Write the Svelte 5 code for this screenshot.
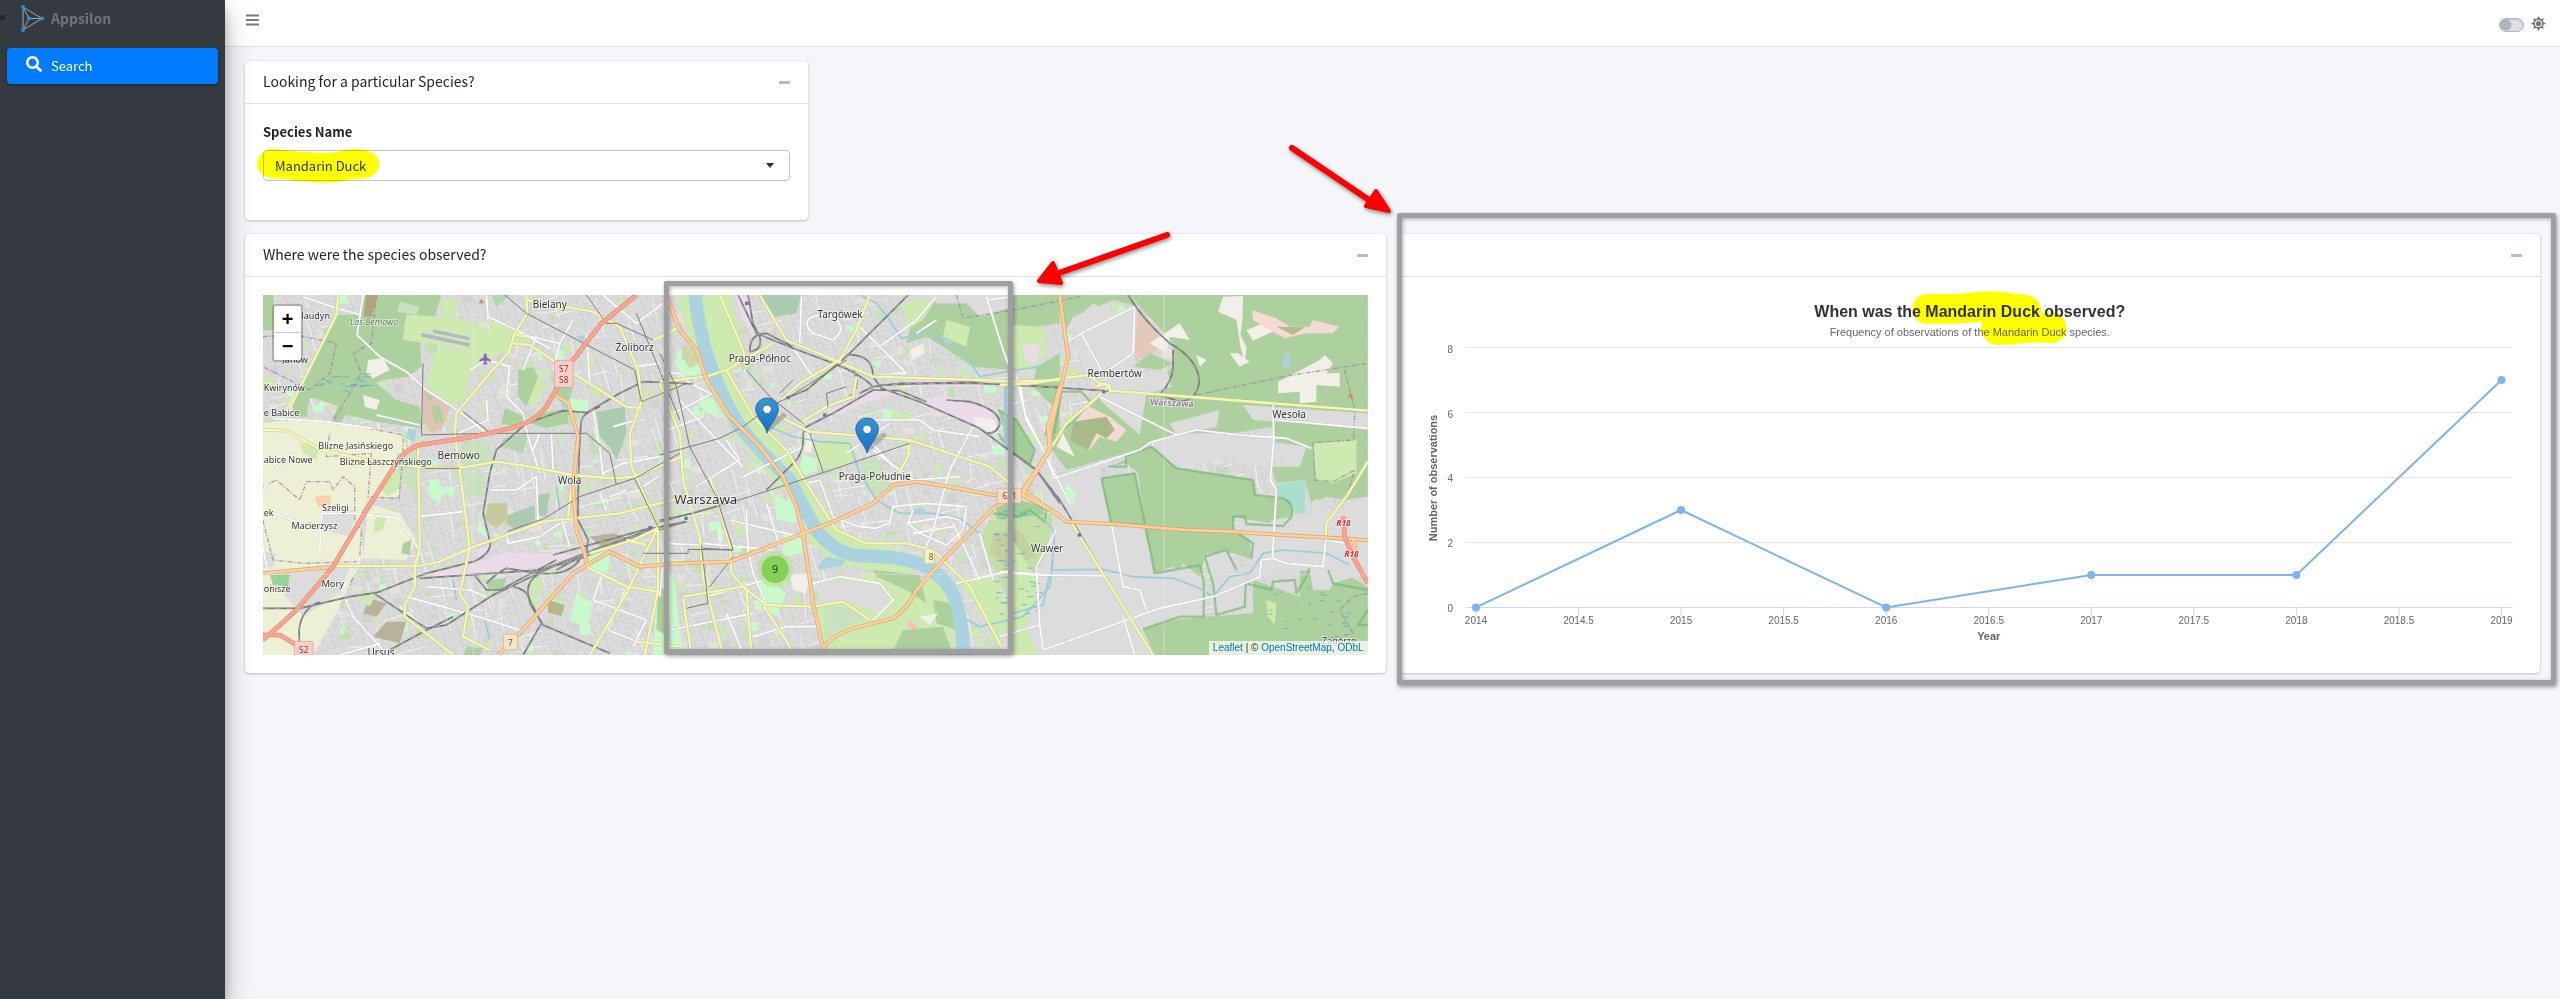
<script>
  const years = [2014, 2014.5, 2015, 2015.5, 2016, 2016.5, 2017, 2017.5, 2018, 2018.5, 2019];
  const counts = [
    [2014, 0],
    [2015, 3],
    [2016, 0],
    [2017, 1],
    [2018, 1],
    [2019, 7]
  ];
  const px = (year) => 58 + (year - 2014) * 205.2;
  const py = (n) => 312.5 - n * 32.5;
  const line = counts.map(([y, n]) => `${px(y)},${py(n)}`).join(' ');

  // The map is drawn in three sheets: west, centre and east.
  const sheets = { w: 0, c: 1260, e: 2280 };

  const areas = [
    // farmland
    ['w', '#eef0d5', 'M69 610L150 600L330 612L490 640L500 690L470 740L480 830L385 835L360 890L370 1010L330 1090L290 1180L220 1305L69 1305Z'],
    ['w', '#eef0d5', 'M385 850L480 880L530 960L500 1020L370 1015Z'],
    ['w', '#eef0d5', 'M160 520L200 540L190 580L130 590Z'],
    ['w', '#dcdcdc', 'M69 995L110 1000L100 1040L69 1045Z M250 880L350 870L330 950L250 930Z M130 1050L330 1040L300 1120L190 1190L130 1120Z'],
    ['w', '#f5d1ad', 'M225 830L270 825L275 855L235 862Z M85 1095L100 1090L100 1120L88 1120Z M140 1080L150 1075L150 1090Z'],
    ['w', '#96d59a', 'M90 1065L150 1062L145 1100L100 1095Z'],
    ['w', '#cdebb0', 'M440 760L470 740L490 800L440 830L420 800Z M410 880L440 890L430 930L400 940Z M230 1080L250 1050L270 1060L250 1100Z M180 670L240 680L230 720L190 700Z'],
    // forest around Bemowo
    ['w', '#add19e', 'M69 225L102 225L102 330L69 330Z'],
    ['w', '#add19e', 'M292 285L360 285L372 250L380 225L605 225L585 290L505 290L490 320L540 350L545 440L505 470L430 480L350 520L300 560L225 535L170 535L210 450Z'],
    ['w', '#add19e', 'M350 500L410 490L470 540L540 560L545 625L410 605L300 580L330 530Z'],
    ['w', '#b2a57a', 'M378 225L414 225L395 292L372 290Z'],
    ['w', '#add19e', 'M160 530L210 535L200 590L160 590Z M300 550L335 560L300 610L275 600Z'],
    ['w', '#c9e1bf', 'M480 245L540 260L530 285L472 275Z'],
    ['w', '#f2efe9', 'M385 420L430 415L450 450L400 475L380 460Z M370 525L420 540L410 570L375 560Z'],
    // airfield and allotments
    ['w', '#cdebb0', 'M500 285L640 290L820 355L820 390L740 420L640 380L490 360Z'],
    ['w', '#cdebb0', 'M600 380L740 410L690 470L680 530L640 560L560 500L575 420Z'],
    ['w', '#b5b6c8', 'M545 338L690 370L690 380L545 350Z M580 328L690 352L690 361L580 338Z'],
    ['w', '#dfc3b3', 'M548 500L632 560L605 630L570 638L550 600Z'],
    ['w', '#add19e', 'M575 560L600 555L610 600L585 610Z M555 520L580 530L570 545Z'],
    ['w', '#cdebb0', 'M600 240L650 235L655 280L610 285Z'],
    ['w', '#cdebb0', 'M740 300L860 340L830 375L760 350Z M840 450L890 455L920 500L880 560L840 520Z'],
    ['w', '#add19e', 'M835 450L880 440L895 470L860 560L835 530Z M795 565L860 590L835 620L785 612Z M940 500L1000 500L990 540L945 530Z M900 580L990 565L985 610L920 625L870 610Z'],
    ['w', '#b3d6b0', 'M755 225L810 225L770 262Z M790 655L865 640L850 700L785 680Z'],
    ['w', '#aacbaf', 'M1070 575L1155 560L1160 640L1130 720L1110 680L1080 650Z M895 825L930 820L920 890L895 885Z M805 885L885 855L885 900L830 930L800 910Z'],
    ['w', '#c8c89f', 'M745 850L800 850L805 895L770 925L735 900Z'],
    ['w', '#c9e1bf', 'M690 660L750 665L760 720L670 740L660 690Z M670 760L740 755L730 830L680 830Z M470 700L540 700L535 840L485 780Z'],
    ['w', '#c8facc', 'M560 800L650 800L640 830L610 820L600 850L570 830Z M990 535L1045 540L1045 575L995 570Z M1045 1000L1110 1000L1105 1060L1050 1050Z M730 860L715 890L750 960L710 930Z'],
    ['w', '#cdebb0', 'M565 1050L660 1030L690 1020L680 1040L590 1060Z M880 1070L910 1080L900 1125L870 1110Z'],
    ['w', '#ebdbe8', 'M570 1060L700 1030L790 1000L960 1000L1020 1010L900 1040L760 1060L690 1060L590 1078Z M720 985L750 980L740 1005L712 1015Z'],
    ['w', '#b9b29a', 'M390 1135L440 1150L410 1190L370 1180Z M440 1205L500 1205L480 1270L400 1250Z M1050 950L1120 940L1180 960L1090 985Z'],
    ['w', '#cdebb0', 'M380 1110L410 1120L390 1160L360 1140Z M920 1130L980 1150L970 1190L920 1170Z'],
    ['w', '#b6b58e', 'M925 1140L975 1155L965 1188L925 1178Z'],
    ['w', '#add19e', 'M490 970L515 960L510 1005L485 1000Z M740 1080L800 1075L790 1105L745 1115Z M680 1280L730 1285L720 1305L670 1305Z'],
    ['w', '#c8facc', 'M1010 1120L1060 1150L1040 1220L990 1200Z M1250 1080L1300 1060L1330 1305L1240 1305L1245 1190Z'],
    ['w', '#add19e', 'M1255 1090L1285 1120L1290 1250L1250 1230Z'],
    // banks of the river
    ['c', '#cdebb0', 'M45 225L215 225L235 330L250 400L215 470L300 600L380 690L430 760L470 860L560 940L700 985L800 1010L740 1060L560 1040L450 970L390 830L290 730L180 570L130 430L85 340Z'],
    ['c', '#c8facc', 'M55 390L120 400L130 460L70 470L45 430Z M120 520L165 540L180 600L120 560Z M345 830L410 850L410 910L350 900Z M300 1080L345 1090L380 1120L350 1190L300 1150Z M370 930L425 960L430 1000L370 1010Z'],
    ['c', '#aacbaf', 'M300 225L425 225L410 280L350 290L320 270Z'],
    ['c', '#ebdbe8', 'M225 225L260 225L290 310L280 350L250 300Z M540 390L600 370L570 410Z'],
    ['c', '#ebdbe8', 'M500 575L580 540L660 505L740 520L690 525L600 555L540 585Z M740 480L960 480L960 500L720 495Z M760 540L860 525L920 550L1000 570L1015 620L990 640L900 600L810 570Z'],
    ['c', '#f2efe9', 'M750 390L790 370L795 400L760 420Z M940 590L1005 600L1010 640L950 620Z M390 1065L450 1060L440 1120L400 1110Z'],
    ['c', '#cdd6a8', 'M70 375L110 390L120 430L90 445L65 410Z'],
    ['c', '#cdebb0', 'M470 660L560 655L600 700L550 740L490 745L460 700Z M690 570L760 580L740 600L680 600Z'],
    ['c', '#c8facc', 'M430 700L470 720L470 755L430 765L420 735Z M670 570L695 570L695 600L670 600Z'],
    ['c', '#f2efe9', 'M440 640L460 650L455 700L435 695Z'],
    ['c', '#c9e1bf', 'M600 720L660 720L690 790L650 830L620 800Z'],
    ['c', '#add19e', 'M840 225L1200 225L1200 310L1060 330L1060 450L940 440L850 380L800 350L740 370L760 290Z'],
    ['c', '#cdebb0', 'M730 250L830 235L790 300L740 330Z M860 300L930 320L920 380L850 350Z M1060 330L1150 320L1160 400L1100 460L1060 440Z'],
    ['c', '#dcdcdc', 'M800 225L1050 225L1060 260L960 290L920 250L830 250Z'],
    ['c', '#ebdbe8', 'M1090 370L1130 375L1120 420L1085 410Z'],
    ['c', '#add19e', 'M1130 440L1200 400L1200 640L1150 650L1180 560L1120 500Z'],
    ['c', '#a4cf9b', 'M1015 570L1070 600L1125 690L1110 740L1050 690Z'],
    ['c', '#a4cf9b', 'M1010 860L1080 840L1150 860L1160 905L1100 900L1010 900Z'],
    ['c', '#c3dfa8', 'M990 900L1200 880L1200 1180L1100 1260L990 1020L960 950Z'],
    ['c', '#c6cfa0', 'M1000 940L1080 930L1130 1010L1040 1040L990 1000Z'],
    ['c', '#cdebb0', 'M480 1090L640 1060L740 1080L850 1080L880 1200L880 1305L490 1305L470 1200Z'],
    ['c', '#add19e', 'M640 1050L780 1065L800 1150L740 1110L650 1070Z M730 1230L850 1220L880 1305L700 1290Z M820 1140L880 1150L890 1230L830 1210Z'],
    ['c', '#dcdcdc', 'M470 1090L640 1080L690 1130L660 1180L560 1140L480 1150Z'],
    ['c', '#c9e1bf', 'M495 1150L590 1170L620 1190L520 1240L495 1260Z'],
    ['c', '#ffb8c0', 'M745 1200L775 1220L770 1232L745 1218Z'],
    ['c', '#f2efe9', 'M780 1190L835 1180L810 1215Z'],
    ['c', '#cdebb0', 'M890 1080L1000 1060L1060 1200L1020 1270L950 1150Z M1060 1200L1200 1230L1200 1305L1060 1305Z'],
    // eastern woods
    ['e', '#add19e', 'M170 225L1104 225L1104 600L820 620L700 640L560 660L450 668L410 690L200 750L150 680L210 620L300 530L440 500L520 440L520 370L390 225L415 260L340 240L220 290L200 330Z'],
    ['e', '#dcdcdc', 'M215 310L280 250L340 280L405 260L400 400L430 480L500 440L515 500L450 520L300 510L260 470L230 390Z'],
    ['e', '#e3c9b9', 'M412 270L470 330L480 380L440 420L405 410Z'],
    ['e', '#add19e', 'M450 400L520 430L480 450L400 440Z'],
    ['e', '#f2efe9', 'M670 230L730 228L728 300L722 345L740 380L735 430L722 380L710 300L655 275Z M450 370L540 310L570 360L510 350L500 400Z M740 330L790 310L830 330L760 362Z M865 470L960 420L975 405L1000 430L980 460L1020 460L1020 500L950 495L950 545L900 550L900 515L835 520L835 485Z M690 400L715 400L750 425L720 440Z M590 405L620 420L600 440Z'],
    ['e', '#f5d9d3', 'M757 270L830 295L870 320L930 320L940 300L1018 320L1000 340L920 340L855 355L810 330L760 300Z'],
    ['e', '#b5ba8b', 'M830 320L915 322L880 345Z'],
    ['e', '#f5d9d3', 'M270 560L330 590L380 630L350 665L300 650L270 690L210 660L220 600Z'],
    ['e', '#a9b987', 'M220 605L320 590L345 630L320 655L290 640L265 690L210 660Z'],
    ['e', '#f2efe9', 'M190 640L210 680L225 710L170 680Z'],
    ['e', '#dcdcdc', 'M300 520L440 520L420 645L300 540Z M510 610L660 570L650 620L530 645Z M460 670L540 640L680 640L820 660L810 740L740 740L700 710L560 740L510 720Z M730 555L1104 580L1104 620L830 605L760 600Z'],
    ['e', '#dcdcdc', 'M820 670L920 680L900 740L820 720Z M150 780L300 735L330 920L430 920L460 1060L610 1090L610 1190L500 1190L430 1225L460 1305L110 1305L60 1150L140 1000L160 900L100 750Z'],
    ['e', '#add19e', 'M820 605L1104 625L1104 830L1040 840L980 830L935 850L915 780L830 790L815 740L900 740L920 680L820 665Z'],
    ['e', '#cdebb0', 'M940 670L1070 660L1070 760L1000 790L950 780Z'],
    ['e', '#add19e', 'M305 775L405 760L425 850L440 920L330 905Z M455 680L530 745L760 780L770 830L870 840L880 880L850 920L740 910L700 890L700 930L760 970L760 1020L700 1000L620 1000L600 1070L520 1040L465 1060L440 940L415 760L380 730L330 740Z'],
    ['e', '#add19e', 'M620 1190L760 1180L760 1080L900 1130L900 1050L1000 1040L1104 1100L1104 1305L465 1305L430 1230L520 1200Z'],
    ['e', '#dcdcdc', 'M610 1010L680 990L710 1060L740 1080L740 1160L655 1180L640 1080Z M510 1090L550 1030L610 1080L610 1180L520 1160Z'],
    ['e', '#dcdcdc', 'M700 890L810 910L820 900L1104 850L1104 1060L1000 1090L990 1110L940 1110L930 1050L760 1060L750 960Z M1040 840L1104 830L1104 900L1030 890Z'],
    ['e', '#aadfcb', 'M830 795L918 782L914 878L885 882L870 840L832 830Z'],
    ['e', '#c8facc', 'M198 785L230 820L220 850L200 850Z'],
    ['e', '#dcdcdc', 'M935 850Q950 825 970 850L965 880L935 880Z'],
    ['e', '#cdebb0', 'M40 315L115 320L105 400L60 450L45 420Z M40 960L120 1100L60 1270L38 1200Z M800 1140L830 1150L825 1215L805 1190Z'],
    ['e', '#ebdbe8', 'M70 370L120 375L110 430L75 420Z']
  ];

  const forestEdges = [
    ['c', 'M1015 570L1070 600L1125 690L1110 735L1050 690L1015 640'],
    ['c', 'M1000 880L1080 890L1110 870L1155 905L1160 870L1110 840'],
    ['e', 'M305 775L405 760L465 1060L600 1035L612 1085L612 1190L540 1190L430 1228'],
    ['e', 'M305 775L335 910L430 915'],
    ['e', 'M325 740L380 740L378 710L455 680L530 745L760 780L765 825L850 835Q885 850 875 890L850 918L740 912L735 890L700 890L700 930L760 970L755 1015'],
    ['e', 'M615 1010L640 1090L650 1185L735 1160L738 1090L815 1110L820 1085L885 1080L890 1120L920 1070L930 1045'],
    ['e', 'M615 1010L680 990L710 1050'],
    ['e', 'M185 515L245 515L272 545L225 600L160 660Z'],
    ['e', 'M985 1050L1000 1090L1104 1110M1104 1170L1075 1215L1104 1215']
  ];

  const boundaries = [
    ['w', 'M410 225L395 370L340 400L365 460L300 570L280 605L165 600'],
    ['w', 'M69 350L170 345L290 370L270 460L210 510L69 440'],
    ['w', 'M280 605L440 635L490 645L490 700L478 835L385 830L395 700L260 710L270 640'],
    ['w', 'M69 800L110 780L180 840L200 785L270 785L280 810L310 770L345 800L345 900L365 930L360 1010L330 1100'],
    ['w', 'M69 900L100 1020L190 1030L350 1025'],
    ['c', 'M890 225L910 295L1070 268L1260 230'],
    ['e', 'M590 525L860 468L1104 430'],
    ['e', 'M1035 450L1065 570L1062 660L940 668L945 780L1000 785L1065 750L1040 830'],
    ['e', 'M1104 1120L1060 1130L1020 1170L1060 1240L970 1260']
  ];

  const streams = [
    ['c', 'M600 225L650 250L690 300L725 355L800 340L870 370L920 410L960 470L1070 450L1140 440'],
    ['c', 'M330 620L400 650L480 665L570 670L600 760L650 840L720 880L820 880L900 895L960 940'],
    ['c', 'M1040 480L1040 690M890 1180L960 1220L1090 1190L1170 1100L1180 1020'],
    ['e', 'M15 500L15 670L50 672M130 890L165 940L155 1050L310 1048L400 1070L520 1075L590 1100L640 1130L690 1070L750 1060L790 1000L850 990L980 1000L1050 1035'],
    ['w', 'M640 1080L650 1140M950 800L960 870M735 1200L750 1260'],
    ['e', 'M38 1180L130 1155L150 1060']
  ];

  const minor = [
    ['w', 'M190 230L290 265L365 285M370 225L352 345L420 410L500 455L560 510L660 575L740 640'],
    ['w', 'M100 595L260 605L400 625M410 585L540 615M155 680L69 810M240 1000L245 880L350 880L475 895L535 985M105 880L245 935'],
    ['w', 'M535 890L670 875M740 225L745 290L840 335L930 385M690 450L740 420L810 440L800 530L850 580L865 650L900 760'],
    ['w', 'M740 540L745 600L655 640M830 340L960 370L1000 300M900 640L880 690M935 645L940 750M750 810L830 810L890 770L895 905L890 910L965 895L990 980'],
    ['w', 'M1090 225L1190 310L1270 250M1185 440L1260 430M1060 570L1080 680L1090 770M1090 760L1150 730L1260 710M1080 820L1100 870'],
    ['w', 'M360 1010L350 1050L305 1110L340 1190L430 1290M500 1130L680 1180L840 1230M540 1210L480 1160M800 930L805 970L900 950L960 910'],
    ['w', 'M1060 1140L1090 1060M1060 1140L1220 1200M1180 1280L1220 1200M1160 1100L1105 1230L1180 1260M300 1305L420 1270M69 980L85 1060'],
    ['w', 'M1120 620L1190 600M1110 830L1160 810M960 370L940 450M1040 340L1050 490M890 350L850 450'],
    ['c', 'M420 370L425 230M450 295Q500 270 530 300Q560 330 520 360L460 340Q430 310 450 295M390 370L460 470M590 310L740 460L700 460M660 380L770 300L830 230'],
    ['c', 'M0 460L60 460L90 490L150 520M60 540L190 680L250 740M40 580L160 520M20 630L130 590M110 800L240 720L200 660M250 770L430 680'],
    ['c', 'M640 600L780 600L820 630L960 650M940 620L870 750L820 930L795 990M610 640L700 740M560 700L690 610M640 690L760 780L900 770'],
    ['c', 'M440 790L480 780L520 890L600 920L650 925L690 910L700 860L800 850L920 860L910 930L860 975L780 940L745 910L760 870'],
    ['c', 'M740 910L860 890L900 900M760 940L880 920M960 940L1000 1080M880 910L960 1080M540 890L560 940'],
    ['c', 'M460 1090L540 1070L660 1090L700 1140L640 1200M890 1090L1040 1055L1170 1065M260 870L265 990L280 1060L320 1150'],
    ['c', 'M140 1130L260 1095L320 1080M280 1250L380 1220L470 1220M130 970L340 990M210 900L420 950M320 850L360 980M30 1230L280 1180M200 1180L250 1300M20 970L120 975'],
    ['c', 'M980 230L1030 390L1060 470M980 240L1060 230M1070 470L1100 600L1150 690M770 340L830 300'],
    ['e', 'M205 365L245 340L405 260L400 400L310 460M245 340L310 460M300 530L530 645L590 630L720 645L860 655L935 685M530 645L450 668L420 690L165 775L130 690L75 580L60 480'],
    ['e', 'M820 550L822 660L812 780L830 810L818 1015L785 1020L780 1070L640 1130L480 1165L130 1290M818 1015L860 1030L970 1040L978 960L1040 970'],
    ['e', 'M335 910L370 1100L420 1110L440 1170M170 930L110 1040L120 1215L130 1290M0 1055L100 1065L320 1068M370 1190L405 1305M130 690L210 850M0 1250L120 1215M830 600L1104 625'],
    ['w', 'M1280 950L1260 1130M560 1100L690 1110L740 1130M1210 800L1255 770']
  ];

  const tram = [
    ['w', 'M795 225L860 280L1185 450L1205 545M550 430L545 645L740 640L1040 640L1110 700L1130 795M670 575L760 645M1110 225'],
    ['w', 'M555 745L660 745M800 935L915 895L1020 830L1185 775L1320 700M1185 775L1260 930L1340 905M1205 545L1340 490M1210 1000L1345 1000L1345 988L1480 990'],
    ['c', 'M0 705L180 655L250 620L330 560L390 530L560 420M0 900L100 880L270 830L500 755L750 670M450 640L490 755M260 450L330 530L430 610M500 520L505 560M500 520L560 500'],
    ['c', 'M130 985L220 990L170 830L90 680L50 500L0 400M80 1165L145 1150L125 975M220 1010L150 1100M400 480L360 520'],
    ['w', 'M1040 225L1100 310L1130 310L1240 360M1190 280L1320 600']
  ];

  const secondary = [
    ['w', 'M295 225L290 285L215 435L150 565M69 630L140 632L245 690L380 720L530 740L655 745L770 725L860 738L1000 765L1120 775L1185 770L1325 710'],
    ['w', 'M860 225L862 280L825 340L805 400L750 460L650 580L645 640L660 750L690 985L660 1120L685 1160L670 1250L750 1290'],
    ['w', 'M535 680L540 985L525 1040L525 1100L495 1155L495 1190L640 1305'],
    ['w', 'M285 1038L540 1037L600 1025L690 985L910 905L1140 880L1320 835'],
    ['w', 'M820 370L870 375L1000 460L1160 560L1205 565M860 240L1060 275L1140 320L1195 450L1205 545L1170 640L1175 740L1255 920L1160 1120L1050 1305'],
    ['w', 'M1000 765L985 890M1255 920L1255 1110L1215 1305M1040 1040L1160 1100L1255 1115M1050 1000L1180 960L1255 925M1205 545L1320 495M1240 360L1320 320M1160 960L1220 975'],
    ['c', 'M0 355L60 320M0 485L140 470L200 450L340 370M200 450L280 590L380 690L440 790L530 930L620 970L740 970L820 990L930 1100L1030 1290'],
    ['c', 'M630 225L590 330L540 420L420 490L365 540M180 225L250 390L260 440M300 225L380 360L500 410L640 470L960 480L1070 485L1200 480M420 610L500 560L580 530L590 470'],
    ['c', 'M330 560L380 600L450 635L750 660L990 740L1050 790M750 660L745 710L700 790M0 490L60 640L70 780L120 950L130 1070L190 1305M150 770L210 970L215 1060L260 1110L275 1305M90 1000'],
    ['c', 'M70 1130L250 1100L320 1155L460 1160L550 1145L630 1200M310 1155L390 1280L400 1305M70 1135L95 1305'],
    ['e', 'M0 495L100 490L185 475L265 465L300 490L330 495L295 530L200 610L150 690M330 495L330 512L500 525L1104 572M210 900L460 1305M1104 725L1040 830L980 910L978 950M320 490L285 500'],
    ['w', 'M1190 1265L1320 1280M860 350L830 345']
  ];

  const primary = [
    ['w', 'M69 1060L230 1045L280 1040M940 520L985 550L1015 650L1000 800L1010 930L1035 1000L1040 1030M775 1305L840 1240L920 1150L1000 1060L1110 995L1200 1040L1320 1030'],
    ['c', 'M0 1035L70 1030L210 1025L380 960L520 905L640 850L700 795L770 785L870 800L1000 825L1090 825L1200 885M20 225L60 330L110 390L140 480L210 590L300 680L370 770L410 860L430 940L460 1150L490 1285'],
    ['c', 'M490 1285Q520 1240 600 1220L700 1195Q740 1170 770 1110L850 1020L1000 865L1090 820L1170 690L1165 620L1200 500'],
    ['e', 'M180 225L205 410L150 640L152 685L70 810L200 905L340 912L560 930L700 935L850 945L1104 960M1060 960L1070 1000']
  ];

  const trunk = [
    ['w', 'M1190 225L1085 310L1000 420L960 490L920 560Q890 600 830 620L700 650L540 675Q490 690 460 745L380 870L280 1040L170 1170L115 1220L69 1260M69 1245L120 1245L170 1275L200 1305'],
    ['e', 'M1030 890L1035 950L1060 1010L1104 1090']
  ];

  const rail = [
    ['w', 'M69 1165L180 1165L330 1130L410 1118L560 1060L700 1025Q750 1005 752 970L730 880L750 760L770 690L860 610L970 572L1040 578L1140 520L1210 485L1290 488L1360 492'],
    ['w', 'M1025 600Q1015 700 1015 900L1045 960L1040 1000M180 1305L178 1230Q185 1165 240 1145M400 1118L560 1225L620 1215L760 1125L960 1030L1240 925L1340 905'],
    ['w', 'M450 1290L560 1230L640 1190M540 1075L900 1050L1010 1020L1240 930M700 1060L740 1110L780 1110L950 1020M740 1090Q770 1060 800 1045L900 1060M820 1100Q870 1110 870 1150L910 1215L1110 1300M1030 1000Q1000 1070 900 1060Q850 1090 870 1140L905 1210L850 1305'],
    ['w', 'M1025 600Q1030 580 1080 560'],
    ['w', 'M940 1005L1240 922M880 1060L1100 975M950 1050L1020 1010'],
    ['c', 'M235 225L290 340L400 385L520 430Q600 460 640 500L720 490L960 490L1200 502M265 225L280 310L300 350Q310 390 270 395Q270 340 320 340L400 380M745 225L640 330L560 410L440 510L380 535'],
    ['c', 'M560 405Q640 400 640 470L665 505L780 545L960 625L1060 700L1130 750L1200 850M430 640L440 620L520 580L640 510L720 512L800 545M430 640Q435 700 400 730L320 810M0 905L170 860'],
    ['c', 'M860 540L930 545Q1020 570 1020 610Q1015 640 980 640M640 500L600 520M660 495L960 485M580 450Q610 500 560 540'],
    ['e', 'M0 492L440 520L720 540L1104 573M385 225Q430 300 510 370Q600 420 598 490Q590 540 540 545L480 525Q520 480 520 440L520 390M0 670L110 750L180 840L240 940L350 1130L460 1305']
  ];

  const labels = [
    [185, 298, 'laudyn', 'w', 27, 'start'], [166, 428, 'Janów', 'w', 27, 'middle'],
    [72, 512, 'Kwirynów', 'w', 27, 'start'], [72, 588, 'e Babice', 'w', 27, 'start'],
    [72, 728, 'abice Nowe', 'w', 27, 'start'], [348, 688, 'Blizne Jasińskiego', 'w', 27, 'middle'],
    [438, 734, 'Blizne Łaszczyńskiego', 'w', 27, 'middle'], [657, 718, 'Bemowo', 'w', 31, 'middle'],
    [930, 263, 'Bielany', 'w', 30, 'middle'], [1185, 393, 'Żoliborz', 'w', 30, 'middle'],
    [990, 793, 'Wola', 'w', 30, 'middle'], [287, 873, 'Szeligi', 'w', 27, 'middle'],
    [72, 888, 'ek', 'w', 27, 'start'], [224, 927, 'Macierzysz', 'w', 27, 'middle'],
    [279, 1100, 'Mory', 'w', 28, 'middle'], [72, 1115, 'onisze', 'w', 27, 'start'],
    [424, 1308, 'Ursus', 'w', 30, 'middle'],
    [541, 294, 'Targówek', 'c', 30, 'middle'], [300, 426, 'Praga-Północ', 'c', 30, 'middle'],
    [645, 779, 'Praga-Południe', 'c', 30, 'middle'], [138, 851, 'Warszawa', 'c', 40, 'middle'],
    [345, 472, 'Rembertów', 'e', 30, 'middle'], [868, 594, 'Wesoła', 'e', 30, 'middle'],
    [142, 996, 'Wawer', 'e', 30, 'middle'], [1018, 1271, 'Zagórze', 'e', 27, 'middle']
  ];

  const pins = [[322, 640], [622, 700]];

  // Small blocks and side streets, spread with a repeatable sequence.
  let seed = 17;
  const rnd = () => {
    seed = (seed * 16807) % 2147483647;
    return seed / 2147483647;
  };
  const tints = ['#cdebb0', '#c9e1bf', '#c3dfb4', '#c8facc', '#d2d2cf', '#cfe6c0', '#e6e2da'];
  const blocks = [];
  for (let i = 0; i < 950; i++) {
    const x = 69 + rnd() * 2900;
    const y = 225 + rnd() * 1080;
    const w = 8 + rnd() * 30;
    const h = 8 + rnd() * 24;
    const s = rnd() * 14 - 7;
    blocks.push({ d: `M${x} ${y}l${w} ${s}l${-s} ${h}l${-w} ${-s}Z`, fill: tints[Math.floor(rnd() * tints.length)] });
  }
  let lanes = '';
  for (let i = 0; i < 480; i++) {
    const x = 69 + rnd() * 3000;
    const y = 225 + rnd() * 1080;
    const l = 30 + rnd() * 70;
    const a = (rnd() < 0.5 ? -0.35 : 1.2) + rnd() * 0.3;
    lanes += `M${x} ${y}l${Math.cos(a) * l} ${Math.sin(a) * l}`;
  }
  let marsh = '';
  for (let i = 0; i < 46; i++) marsh += `M${2260 + rnd() * 130} ${870 + rnd() * 320}h${8 + rnd() * 14}`;
  for (let i = 0; i < 18; i++) marsh += `M${230 + rnd() * 150} ${460 + rnd() * 70}h${8 + rnd() * 20}`;
  for (let i = 0; i < 22; i++) marsh += `M${3060 + rnd() * 270} ${1100 + rnd() * 130}h${6 + rnd() * 14}`;
</script>

{#snippet roads(list, cls)}
  {#each list as [sheet, d]}
    <path class={cls} {d} transform="translate({sheets[sheet]} 0)" />
  {/each}
{/snippet}

{#snippet arrow(cls, w, h, shaft, head)}
  <svg class="arrow {cls}" width={w} height={h} viewBox="0 0 {w} {h}" aria-hidden="true">
    <path d={shaft} stroke="#f00" stroke-width="6" stroke-linecap="round" fill="none" />
    <path d={head} fill="#f00" stroke="#f00" stroke-width="4" stroke-linejoin="round" />
  </svg>
{/snippet}

<div class="app">
  <aside>
    <a class="brand" href="#home">
      <svg width="26" height="28" viewBox="0 0 26 28" aria-hidden="true">
        <path d="M3 3V26L22 14.500ZM3 3L9 14.500L3 26M9 14.500H22" fill="none" stroke="#a4a8ab" />
        <g fill="#0e95f5"><circle cx="3" cy="3" r="2" /><circle cx="3" cy="26" r="2" /><circle cx="9" cy="14.500" r="2" /><circle cx="22" cy="14.500" r="2" /></g>
      </svg>
      <span>Appsilon</span>
    </a>
    <nav>
      <a class="item" href="#search">
        <svg width="16" height="16" viewBox="0 0 512 512" aria-hidden="true"><path fill="#fff" d="M505 442.700L405.300 343c-4.500-4.500-10.600-7-17-7H372c27.600-35.300 44-79.700 44-128C416 93.100 322.900 0 208 0S0 93.100 0 208s93.100 208 208 208c48.300 0 92.700-16.400 128-44v16.300c0 6.400 2.500 12.500 7 17l99.700 99.700c9.400 9.400 24.600 9.400 33.900 0l28.300-28.300c9.400-9.400 9.400-24.600.1-34zM208 336c-70.700 0-128-57.200-128-128 0-70.700 57.200-128 128-128 70.700 0 128 57.200 128 128 0 70.700-57.200 128-128 128z" /></svg>
        <span>Search</span>
      </a>
    </nav>
  </aside>

  <div class="page">
    <header>
      <button class="menu" aria-label="Toggle sidebar">
        <svg width="13" height="12" viewBox="0 0 13 12"><path d="M0 1.500H13M0 6H13M0 10.500H13" stroke="#7d7d7d" stroke-width="2" /></svg>
      </button>
      <div class="theme">
        <input type="checkbox" aria-label="Dark mode" />
        <svg width="15" height="15" viewBox="0 0 15 15" aria-hidden="true">
          <circle cx="7.500" cy="7.500" r="4.300" fill="none" stroke="#777" stroke-width="1.400" />
          <circle cx="7.500" cy="7.500" r="2.600" fill="#777" />
          {#each [0, 45, 90, 135, 180, 225, 270, 315] as turn}
            <path d="M5.700 3.200L7.500 0L9.300 3.200Z" fill="#777" transform="rotate({turn} 7.500 7.500)" />
          {/each}
        </svg>
      </div>
    </header>

    <main>
      <section class="card narrow">
        <div class="head"><h3>Looking for a particular Species?</h3><button class="fold" aria-label="Collapse"><i></i></button></div>
        <div class="body">
          <label for="species">Species Name</label>
          <div class="pick">
            <select id="species"><option>Mandarin Duck</option></select>
            <svg class="caret" width="8" height="5" viewBox="0 0 8 5" aria-hidden="true"><path d="M0 0H8L4 5Z" fill="#333" /></svg>
            <svg class="marker-pen" width="122" height="35" viewBox="0 0 366 105" aria-hidden="true"><path fill="#ff0" d="M44 0L90 4Q160 12 220 12L270 2Q330 -4 350 14Q370 32 366 50Q360 82 318 89L290 89Q240 102 190 101Q120 98 90 90L40 88Q2 76 0 44Q6 6 44 0Z" /></svg>
          </div>
        </div>
      </section>

      <section class="card wide">
        <div class="head"><h3>Where were the species observed?</h3><button class="fold" aria-label="Collapse"><i></i></button></div>
        <div class="body">
          <div class="map">
            <svg class="tiles" viewBox="0 0 1105 360" preserveAspectRatio="xMidYMid slice" role="img" aria-label="Map of Warszawa">
              <defs>
                <pattern id="streets" width="46" height="38" patternUnits="userSpaceOnUse" patternTransform="rotate(-18)">
                  <path d="M0 0H46M0 15H30M12 0V38M30 15V38M30 27H46M40 0V15" stroke="#c9c9c9" stroke-width="2" fill="none" />
                </pattern>
                <linearGradient id="pin" x1="0" y1="0" x2="0" y2="1"><stop offset="0" stop-color="#3a94d2" /><stop offset="1" stop-color="#126fc6" /></linearGradient>
              </defs>
              <g transform="translate(-23 -75) scale(0.33333)">
                <rect x="60" y="220" width="3340" height="1100" fill="#dcdcdc" />
                <rect x="60" y="220" width="3340" height="1100" fill="url(#streets)" />
                {#each blocks as b}<path d={b.d} fill={b.fill} />{/each}
                <path d={lanes} class="lane" />
                {#each areas as [sheet, fill, d]}<path {d} {fill} transform="translate({sheets[sheet]} 0)" />{/each}
                <path d={marsh} class="marsh" />
                {@render roads(forestEdges, 'edge')}
                {@render roads(boundaries, 'bound')}
                {@render roads(streams, 'stream')}
                <g transform="translate(1260 0)">
                  <path class="river" d="M105 215Q115 330 150 430Q190 540 240 620L310 700L390 780Q425 850 470 930Q530 1010 620 1008Q740 1010 800 1040Q870 1080 890 1150Q912 1220 910 1320" />
                  <path d="M470 1040L500 1010L555 1020L550 1035L480 1050Z M760 870L790 862L800 880L770 885Z M845 355Q860 345 880 368L862 372Z" fill="#aad3df" />
                </g>
                <path d="M3125 440L3140 400L3152 405L3150 445Z M960 530L985 540L980 565L965 560Z M1010 350L1035 345L1030 370Z M505 625L530 630L525 665L500 655Z" fill="#aad3df" />
                {@render roads(minor, 'minor-case')}
                {@render roads(minor, 'minor')}
                {@render roads(rail, 'rail')}
                {@render roads(rail, 'rail-dash')}
                {@render roads(secondary, 'secondary-case')}
                {@render roads(secondary, 'secondary')}
                {@render roads(tram, 'tram')}
                {@render roads(primary, 'primary-case')}
                {@render roads(primary, 'primary')}
                {@render roads(trunk, 'trunk-case')}
                {@render roads(trunk, 'trunk')}
                <path d="M701 225V1305M2773 225V1305M69 1063H3384" stroke="#e8e8e8" stroke-width="2" opacity=".7" />
                <path d="M716 250L725 236L734 250Z M3323 533L3332 517L3341 533Z" fill="#d08f55" />
                <path d="M734 402L739 402L740 412L752 420V424L740 420L738 428L743 432H730L734 428L733 420L720 424V420L733 412Z" fill="#8461c4" stroke="#8461c4" stroke-width="2" />
                <g fill="#6b6fb8"><rect x="1516" y="245" width="10" height="10" /><rect x="1640" y="528" width="10" height="10" /><rect x="1750" y="580" width="10" height="10" /><rect x="1334" y="890" width="10" height="10" /><rect x="2587" y="510" width="10" height="10" /><rect x="2514" y="940" width="10" height="10" /><rect x="1226" y="918" width="10" height="10" /></g>
                {#each labels as [x, y, name, sheet, size, anchor]}
                  <text class="place" x={x + sheets[sheet]} {y} font-size={size} text-anchor={anchor}>{name}</text>
                {/each}
                <text class="place wood" x="403" y="315" font-size="26" text-anchor="middle">Las Bemowo</text>
                <text class="place city" x="2796" y="558" font-size="26" text-anchor="middle" transform="rotate(3 2796 558)">Warszawa</text>
                <text class="place route" x="3311" y="917" font-size="25" text-anchor="middle">R18</text>
                <text class="place route" x="3335" y="1011" font-size="25" text-anchor="middle">R18</text>
                <g class="shield">
                  <rect x="944" y="422" width="56" height="80" rx="5" fill="#f6cfc8" stroke="#d59a90" /><text x="972" y="456" fill="#96382c">S7</text><text x="972" y="489" fill="#96382c">S8</text>
                  <rect x="164" y="1264" width="56" height="50" rx="5" fill="#f6cfc8" stroke="#d59a90" /><text x="192" y="1298" fill="#96382c">S2</text>
                  <rect x="791" y="1243" width="42" height="46" rx="5" fill="#f8e2c8" stroke="#d5ab7c" /><text x="812" y="1277" fill="#7d532a">7</text>
                  <rect x="2273" y="805" width="72" height="45" rx="5" fill="#f5dcc8" stroke="#d5ab7c" /><text x="2309" y="838" fill="#7d532a">631</text>
                  <rect x="2054" y="986" width="30" height="45" rx="5" fill="#f2f2c5" stroke="#c5c593" /><text x="2074" y="1019" fill="#606030">8</text>
                </g>
                <g transform="translate(1260 0)">
                  {#each pins as [x, y]}
                    <g transform="translate({x} {y})">
                      <path d="M0 0L55 -48Q65 -62 45 -60L18 -40Z" fill="#000" opacity=".2" />
                      <path d="M0 -1C-4 -22 -34 -48 -34 -73A34 33 0 0 1 34 -73C34 -48 4 -22 0 -1Z" fill="url(#pin)" stroke="#2a6fa8" stroke-width="3" />
                      <circle cx="0" cy="-72" r="13" fill="#fff" stroke="#2f74ad" stroke-width="3" />
                    </g>
                  {/each}
                  <circle cx="346" cy="1048" r="54" fill="#b5e28c" opacity=".6" />
                  <circle cx="346" cy="1048" r="41" fill="#6ecc39" opacity=".75" />
                  <text x="346" y="1059" font-size="32" text-anchor="middle" class="count">9</text>
                </g>
              </g>
            </svg>
            <div class="zoom"><button aria-label="Zoom in">+</button><button aria-label="Zoom out">−</button></div>
            <div class="credit"><a href="#leaflet">Leaflet</a> | © <a href="#osm">OpenStreetMap</a>, <a href="#odbl">ODbL</a></div>
            <div class="frame area"></div>
            {@render arrow('to-map', 142, 62, 'M132 10L21 49', 'M18 38L4 56L26 58Z')}
          </div>
        </div>
      </section>

      <section class="card wide">
        <div class="head"><h3></h3><button class="fold" aria-label="Collapse"><i></i></button></div>
        <div class="body">
          <svg class="chart" viewBox="0 0 1105 360" role="img" aria-label="Observations per year">
            {#each [0, 2, 4, 6, 8] as n}
              <path d="M48 {py(n)}H1095" stroke={n ? '#e6e6e6' : '#ccd6eb'} />
              <text class="tick" x="35" y={py(n) + 5} text-anchor="end">{n}</text>
            {/each}
            {#each years as year}
              <path d="M{px(year)} 313V321" stroke="#ccd6eb" />
              <text class="tick" x={px(year)} y="329" text-anchor="middle">{year}</text>
            {/each}
            <polyline points={line} fill="none" stroke="#7cb5ec" stroke-width="2" stroke-linejoin="round" />
            {#each counts as [y, n]}<circle cx={px(y)} cy={py(n)} r="4" fill="#7cb5ec" />{/each}
            <text class="title" x="552" y="22" text-anchor="middle">When was the Mandarin Duck observed?</text>
            <text class="sub" x="552" y="41" text-anchor="middle">Frequency of observations of the Mandarin Duck species.</text>
            <text class="axis" x="571" y="345" text-anchor="middle">Year</text>
            <text class="axis" text-anchor="middle" transform="translate(19 183) rotate(-90)">Number of observations</text>
            <g class="pen" transform="translate(362 -25) scale(0.33333)" fill="#ff0">
              <path d="M440 72L540 71Q640 57 685 68L745 75Q783 86 785 125L785 128L830 128Q860 145 861 178Q855 215 815 219Q760 214 700 223L650 225Q605 215 604 170L608 155L520 161L440 161Q398 155 398 115Q402 76 440 72Z" />
            </g>
          </svg>
        </div>
        <div class="frame whole"></div>
        {@render arrow('to-chart', 114, 78, 'M7 7L90 63', 'M91 50L81 65L104 70Z')}
      </section>
    </main>
  </div>
</div>

<style>
  :global(body) { margin: 0; background: #f4f6f9; }
  .app { display: flex; min-height: 100vh; font-family: 'Noto Sans CJK SC', 'Noto Sans', sans-serif; font-size: 13px; color: #212529; }
  aside { position: relative; z-index: 2; flex: 0 0 225px; box-sizing: border-box; background: #343a40; box-shadow: 0 14px 28px rgba(0, 0, 0, 0.25), 0 10px 10px rgba(0, 0, 0, 0.22); }
  aside::before { content: ''; position: absolute; left: 0; top: 15px; width: 5px; height: 5px; border-radius: 50%; background: #212529; }
  a { text-decoration: none; }
  .brand { display: flex; align-items: center; gap: 5px; height: 28px; padding: 4px 20px; color: #6f757c; font-size: 14px; font-weight: 700; line-height: 26px; }
  nav { padding: 12px 7px; }
  .item { display: flex; align-items: center; gap: 9px; box-sizing: border-box; height: 36px; padding: 0 19px 2px; border-radius: 4px; background: #007bff; color: #fff; box-shadow: 0 1px 3px rgba(0, 0, 0, 0.12), 0 1px 2px rgba(0, 0, 0, 0.24); }
  .item svg { margin-bottom: 2px; }
  .page { flex: 1; min-width: 0; }
  header { display: flex; align-items: center; justify-content: space-between; box-sizing: border-box; height: 47px; padding: 0 14px 0 21px; border-bottom: 1px solid #dee2e6; background: #fff; }
  button { display: block; padding: 0; border: 0; background: none; font: inherit; cursor: pointer; }
  .menu svg { display: block; margin-bottom: 7px; }
  .theme { display: flex; align-items: center; gap: 7px; }
  .theme input { appearance: none; box-sizing: border-box; width: 25px; height: 14px; margin: 4px 0 0; border: 1px solid #adb5bd; border-radius: 7px; background: radial-gradient(circle at 6px 6px, #adb5bd 5px, transparent 6px), #dee2e6; box-shadow: inset 0 1px 2px rgba(0, 0, 0, 0.15); }
  main { display: grid; grid-template-columns: repeat(4, minmax(0, 1fr)); gap: 14px; padding: 14px 20px; }
  .card { position: relative; border-radius: 4px; background: #fff; box-shadow: 0 0 1px rgba(0, 0, 0, 0.2), 0 1px 3px rgba(0, 0, 0, 0.2); }
  .narrow { grid-column: 1 / 2; }
  .narrow + .wide { grid-column: 1 / 3; }
  .wide + .wide { grid-column: 3 / 5; }
  .head { display: flex; align-items: center; justify-content: space-between; box-sizing: border-box; height: 43px; padding: 0 18px; border-bottom: 1px solid #dfdfdf; }
  h3 { margin: 0; font-size: 14px; font-weight: 400; line-height: 20px; }
  .head h3 { padding-bottom: 2px; }
  .fold { padding: 8px 0; }
  .fold i { display: block; width: 11px; height: 3px; border-radius: 1px; background: #b4bbc2; }
  .body { padding: 18px; }
  label { display: block; margin-bottom: 8px; font-weight: 700; line-height: 20px; }
  .pick { position: relative; margin-bottom: 21px; }
  select { display: block; appearance: none; box-sizing: border-box; width: 100%; height: 31px; padding: 0 11px; border: 1px solid #c4c4c4; border-radius: 4px; background: #fff; color: #333; font: inherit; }
  .caret { position: absolute; right: 16px; top: 13px; }
  .marker-pen { position: absolute; left: -6px; top: -1px; mix-blend-mode: multiply; pointer-events: none; }
  .map { position: relative; height: 360px; }
  .tiles { display: block; width: 100%; height: 100%; }
  .tiles path { stroke-linejoin: round; }
  .lane { fill: none; stroke: #f2f2f2; stroke-width: 3; }
  .marsh { fill: none; stroke: #4aa3dc; stroke-width: 2; }
  .edge { fill: none; stroke: #78b878; stroke-width: 7; opacity: 0.7; }
  .bound { fill: none; stroke: #9f8aa0; stroke-width: 4; stroke-dasharray: 14 5 4 5; opacity: 0.8; }
  .stream { fill: none; stroke: #9acbd9; stroke-width: 5; }
  .river { fill: none; stroke: #aad3df; stroke-width: 40; }
  .minor-case { fill: none; stroke: #c8c8c8; stroke-width: 7; }
  .minor { fill: none; stroke: #fff; stroke-width: 5; }
  .tram { fill: none; stroke: #7c7c76; stroke-width: 3; }
  .rail { fill: none; stroke: #777; stroke-width: 5; }
  .rail-dash { fill: none; stroke: #b8b8b8; stroke-width: 2; stroke-dasharray: 18 18; }
  .secondary-case { fill: none; stroke: #c6c78d; stroke-width: 10; }
  .secondary { fill: none; stroke: #f5f7b5; stroke-width: 7; }
  .primary-case { fill: none; stroke: #dba46c; stroke-width: 12; }
  .primary { fill: none; stroke: #fccf9c; stroke-width: 8; }
  .trunk-case { fill: none; stroke: #de8069; stroke-width: 14; }
  .trunk { fill: none; stroke: #f7a58f; stroke-width: 11; }
  .place { fill: #333; stroke: rgba(255, 255, 255, 0.65); stroke-width: 5; paint-order: stroke; font-family: 'Noto Sans', sans-serif; }
  .wood { fill: #557a52; font-style: italic; }
  .city { fill: #9c7ba0; font-weight: 700; }
  .route { fill: #c0303c; font-weight: 700; font-style: italic; }
  .shield { font-family: 'Noto Sans', sans-serif; font-size: 25px; text-anchor: middle; stroke-width: 2; }
  .shield text { stroke: none; }
  .count { fill: #333; font-family: 'Noto Sans', sans-serif; }
  .zoom { position: absolute; left: 9px; top: 9px; border: 2px solid rgba(0, 0, 0, 0.2); border-radius: 4px; background-clip: padding-box; }
  .zoom button { width: 27px; height: 27px; background: #fff; color: #000; font: 700 20px/27px 'Liberation Sans', sans-serif; }
  .zoom button:first-child { box-sizing: border-box; border-bottom: 1px solid #ccc; border-radius: 2px 2px 0 0; }
  .zoom button:last-child { border-radius: 0 0 2px 2px; }
  .credit { position: absolute; right: 0; bottom: 0; padding: 0 4px; background: rgba(255, 255, 255, 0.7); color: #333; font: 10px/14px 'Liberation Sans', sans-serif; }
  .credit a { color: #0078a8; }
  .frame { position: absolute; border: 5px solid #9e9ea3; border-radius: 2px; box-shadow: 1px 2px 4px rgba(0, 0, 0, 0.4), inset 1px 1px 4px rgba(0, 0, 0, 0.3); pointer-events: none; }
  .area { left: 401px; top: -14px; bottom: 1px; width: 339px; }
  .whole { left: -3px; top: -21px; right: -16px; bottom: -12px; }
  .arrow { position: absolute; pointer-events: none; filter: drop-shadow(1px 2px 2px rgba(0, 0, 0, 0.45)); }
  .to-map { left: 772px; top: -70px; }
  .to-chart { left: -115px; top: -93px; }
  .chart { display: block; width: 100%; height: 360px; overflow: visible; font-family: 'Liberation Sans', sans-serif; }
  .tick { fill: #666; font-size: 10px; }
  .title { fill: #333; font-size: 16px; font-weight: 700; }
  .sub { fill: #666; font-size: 11px; }
  .axis { fill: #666; font-size: 11px; font-weight: 700; }
  .pen { mix-blend-mode: multiply; }
</style>
